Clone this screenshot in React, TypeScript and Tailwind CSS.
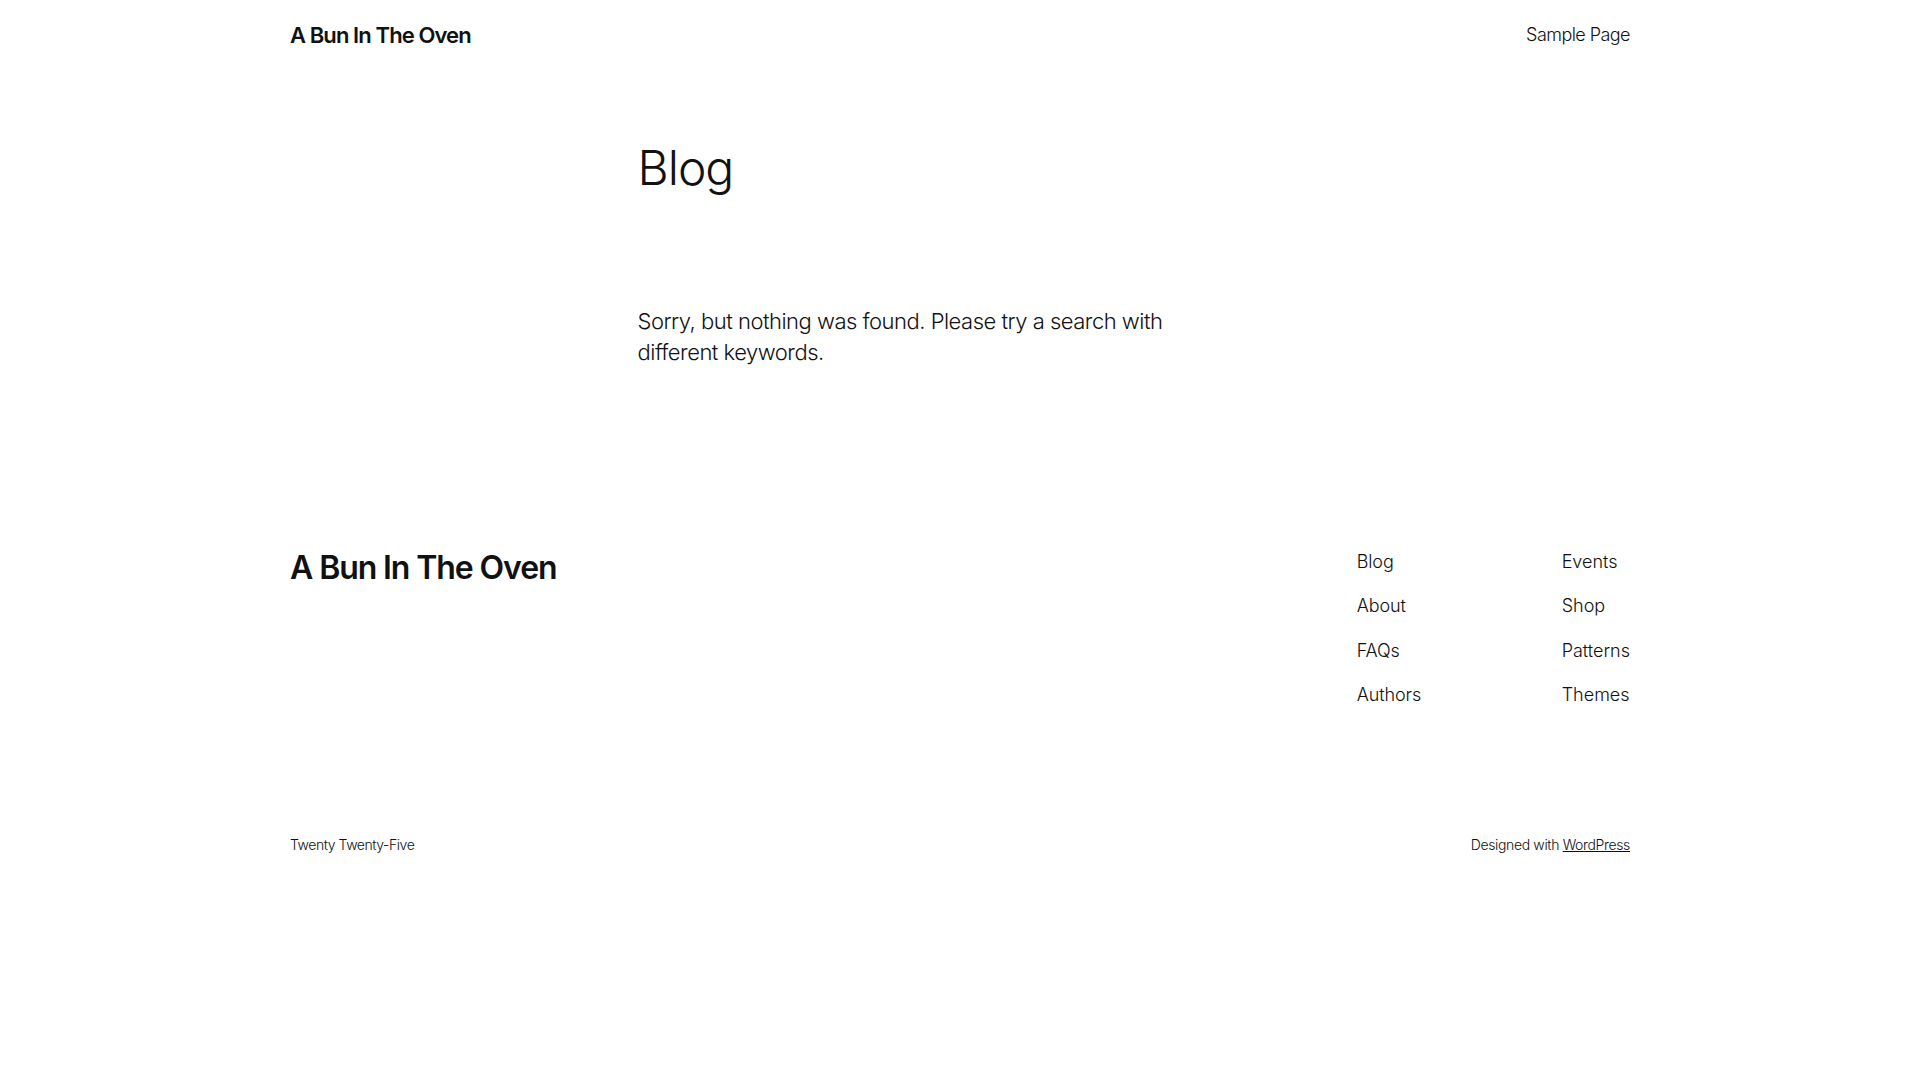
import React from "react";

export default function App() {
  const col1 = ["Blog", "About", "FAQs", "Authors"];
  const col2 = ["Events", "Shop", "Patterns", "Themes"];
  return (
    <div
      className="min-h-screen bg-white text-[#111111]"
      style={{ fontFamily: "Inter, 'Noto Sans', sans-serif" }}
    >
      <header className="mx-auto flex h-[68px] w-[1340px] items-center justify-between pt-[2px]">
        <a className="text-[22px] font-semibold leading-[1.4] tracking-[-0.9px]">A Bun In The Oven</a>
        <nav>
          <a className="text-[18px] font-light leading-[1.4] tracking-[-0.55px]">Sample Page</a>
        </nav>
      </header>

      <main className="mx-auto w-[645px]">
        <h1 className="mt-[73px] text-[48px] font-light leading-[1.125] tracking-[-1px]">Blog</h1>
        <p className="mt-[111px] w-[600px] text-[22px] font-light leading-[1.4] tracking-[-0.5px]">
          Sorry, but nothing was found. Please try a search with different keywords.
        </p>
      </main>

      <footer className="mx-auto w-[1340px]">
        <div className="mt-[181px] flex items-start justify-between">
          <div className="text-[32px] font-semibold leading-[1.2] tracking-[-1.1px]">A Bun In The Oven</div>
          <div className="flex">
            <ul className="flex w-[205px] flex-col gap-[19.3px]">
              {col1.map((t) => (
                <li key={t} className="text-[18px] font-light leading-[1.4] tracking-[-0.1px]">{t}</li>
              ))}
            </ul>
            <ul className="flex flex-col gap-[19.3px]">
              {col2.map((t) => (
                <li key={t} className="text-[18px] font-light leading-[1.4]">{t}</li>
              ))}
            </ul>
          </div>
        </div>
        <div className="mt-[128px] flex items-center justify-between text-[14px] font-light leading-[1.4]">
          <span className="tracking-[-0.45px]">Twenty Twenty-Five</span>
          <span className="tracking-[-0.35px]">
            Designed with <a className="underline">WordPress</a>
          </span>
        </div>
      </footer>
    </div>
  );
}
